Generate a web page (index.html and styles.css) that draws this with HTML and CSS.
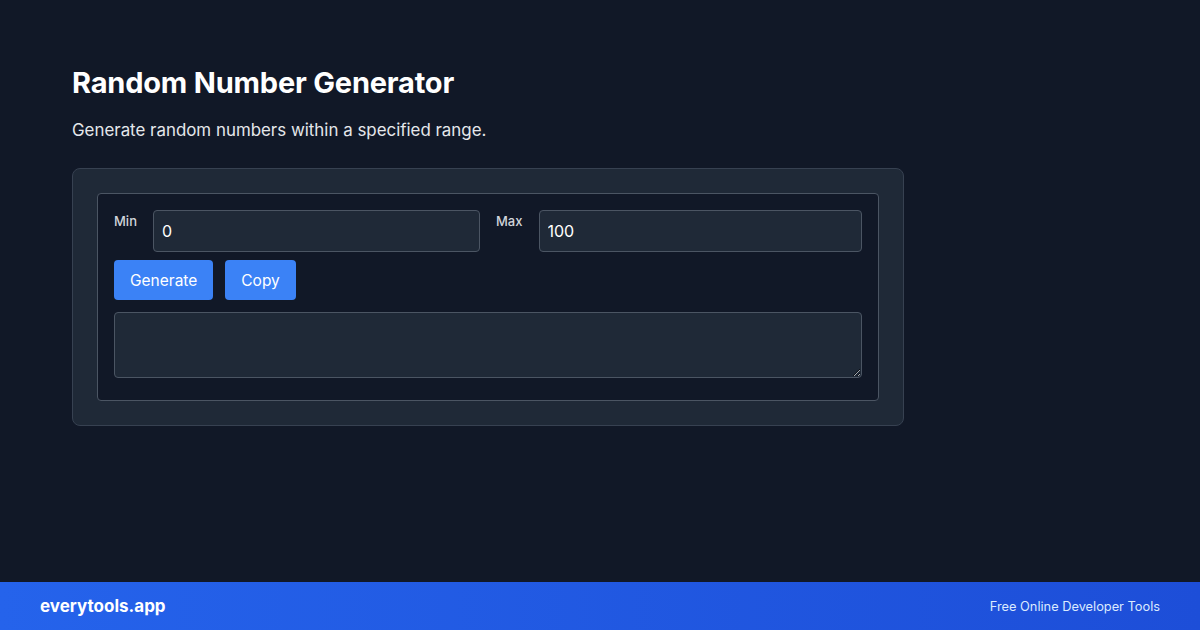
FILE: index.html
```html
<!DOCTYPE html>
<html lang="en">
<head>
    <meta charset="UTF-8">
    <meta name="viewport" content="width=device-width, initial-scale=1.0">
    <title>Random Number Generator</title>
    <link rel="stylesheet" href="styles.css">
</head>
<body>
    <div class="page">
        <main class="container">
            <h1>Random Number Generator</h1>
            <p class="subtitle">Generate random numbers within a specified range.</p>

            <div class="card">
                <div class="tool">
                    <div class="range-row">
                        <div class="field">
                            <label for="min">Min</label>
                            <input type="number" id="min" value="0">
                        </div>
                        <div class="field">
                            <label for="max">Max</label>
                            <input type="number" id="max" value="100">
                        </div>
                    </div>
                    <div class="actions">
                        <button class="btn">Generate</button>
                        <button class="btn">Copy</button>
                    </div>
                    <textarea class="output" readonly></textarea>
                </div>
            </div>
        </main>

        <footer class="footer">
            <span class="brand">everytools.app</span>
            <span class="tagline">Free Online Developer Tools</span>
        </footer>
    </div>
</body>
</html>
```

FILE: styles.css
```css
* {
    box-sizing: border-box;
}

body {
    margin: 0;
    padding: 0;
    background: #111827;
    color: #f9fafb;
    font-family: Inter, "Noto Sans", Arial, sans-serif;
}

.page {
    height: 630px;
    display: flex;
    flex-direction: column;
}

.container {
    flex: 1;
    padding: 65px 72px 0;
}

h1 {
    margin: 0 0 17px;
    font-size: 29px;
    line-height: 36px;
    font-weight: 700;
    color: #ffffff;
    letter-spacing: -0.2px;
}

.subtitle {
    margin: 0 0 26px;
    font-size: 16.9px;
    line-height: 24px;
    color: #e5e7eb;
}

.card {
    width: 832px;
    padding: 24px;
    background: #1f2937;
    border: 1px solid #374151;
    border-radius: 8px;
}

.tool {
    padding: 16px 16px 18px;
    background: #111827;
    border: 1px solid #4b5563;
    border-radius: 4px;
}

.range-row {
    display: flex;
    gap: 16px;
}

.field {
    flex: 1;
    display: flex;
    gap: 16px;
}

.field label {
    padding-top: 3px;
    font-size: 13px;
    font-weight: 500;
    color: #d1d5db;
}

.field input {
    flex: 1;
    min-width: 0;
    height: 42px;
    padding: 0 8px;
    background: #1f2937;
    border: 1px solid #4b5563;
    border-radius: 4px;
    color: #ffffff;
    font-family: inherit;
    font-size: 16px;
    -moz-appearance: textfield;
}

.field input::-webkit-outer-spin-button,
.field input::-webkit-inner-spin-button {
    -webkit-appearance: none;
    margin: 0;
}

.actions {
    display: flex;
    gap: 12px;
    margin-top: 8px;
}

.btn {
    height: 40px;
    padding: 0 16px;
    border: none;
    border-radius: 4px;
    background: #3b82f6;
    color: #ffffff;
    font-family: inherit;
    font-size: 15.5px;
    cursor: pointer;
}

.btn:hover {
    background: #2563eb;
}

.output {
    width: 100%;
    height: 66px;
    margin-top: 12px;
    background: #1f2937;
    border: 1px solid #4b5563;
    border-radius: 4px;
    color: #ffffff;
    font-family: inherit;
    font-size: 16px;
}

.footer {
    height: 48px;
    padding: 0 40px;
    display: flex;
    align-items: center;
    justify-content: space-between;
    background: linear-gradient(90deg, #2563eb, #1d4ed8);
}

.brand {
    font-size: 17px;
    font-weight: 700;
    color: #ffffff;
}

.tagline {
    font-size: 12.8px;
    color: #dbeafe;
}
```
